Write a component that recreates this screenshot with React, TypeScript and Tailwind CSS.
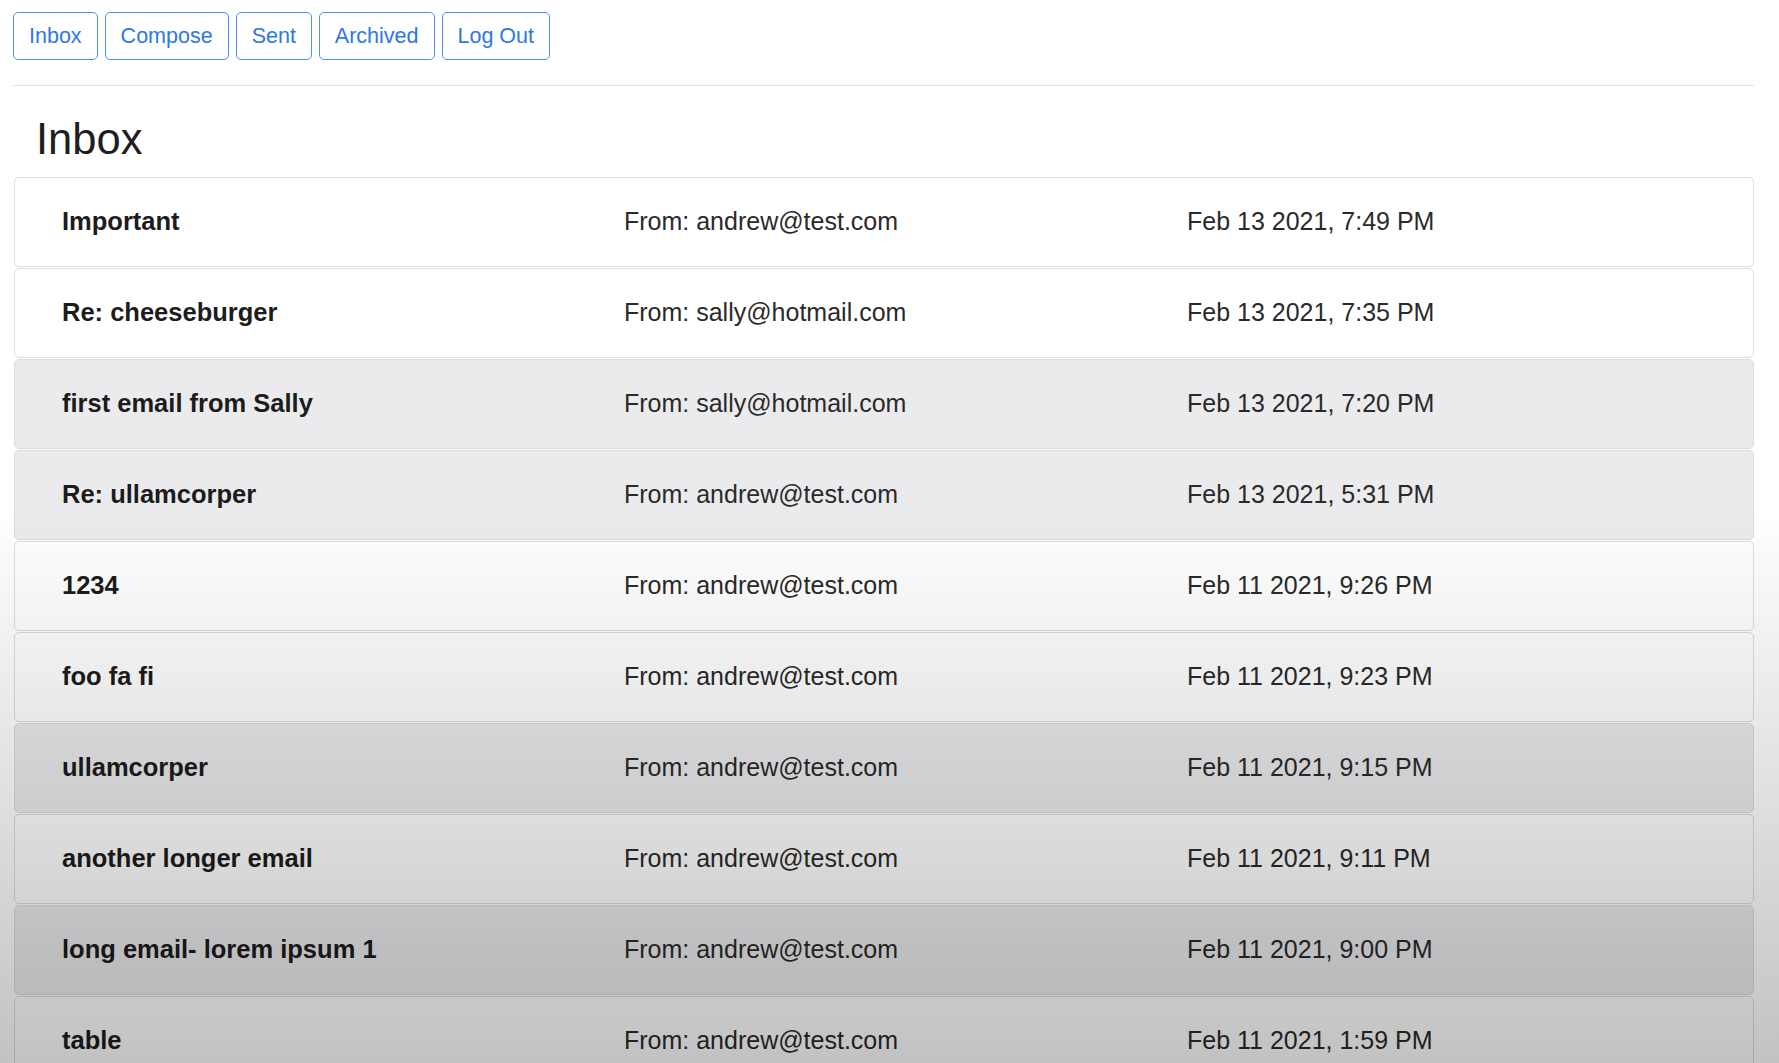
import React from "react";

type Email = { subject: string; from: string; date: string; read: boolean };

const emails: Email[] = [
  { subject: "Important", from: "andrew@test.com", date: "Feb 13 2021, 7:49 PM", read: false },
  { subject: "Re: cheeseburger", from: "sally@hotmail.com", date: "Feb 13 2021, 7:35 PM", read: false },
  { subject: "first email from Sally", from: "sally@hotmail.com", date: "Feb 13 2021, 7:20 PM", read: true },
  { subject: "Re: ullamcorper", from: "andrew@test.com", date: "Feb 13 2021, 5:31 PM", read: true },
  { subject: "1234", from: "andrew@test.com", date: "Feb 11 2021, 9:26 PM", read: false },
  { subject: "foo fa fi", from: "andrew@test.com", date: "Feb 11 2021, 9:23 PM", read: false },
  { subject: "ullamcorper", from: "andrew@test.com", date: "Feb 11 2021, 9:15 PM", read: true },
  { subject: "another longer email", from: "andrew@test.com", date: "Feb 11 2021, 9:11 PM", read: false },
  { subject: "long email- lorem ipsum 1", from: "andrew@test.com", date: "Feb 11 2021, 9:00 PM", read: true },
  { subject: "table", from: "andrew@test.com", date: "Feb 11 2021, 1:59 PM", read: false },
];

const navItems = ["Inbox", "Compose", "Sent", "Archived", "Log Out"];

export default function App() {
  return (
    <div
      className="relative h-screen overflow-hidden bg-white text-[#212529]"
      style={{ fontFamily: '"Liberation Sans", Arial, Helvetica, sans-serif' }}
    >
      <div className="pl-[13px] pr-[25px] pt-[12px]">
        <nav className="flex gap-[7px]">
          {navItems.map((item) => (
            <button
              key={item}
              className="h-[47.5px] rounded-[5px] border border-[#4d8ff0] px-[15px] pt-[2px] text-[21.5px] leading-[31.5px] text-[#2d78e3]"
            >
              {item}
            </button>
          ))}
        </nav>
        <div className="mt-[25px] border-t border-[#e4e4e4]" />
        <h1 className="ml-[23px] mt-[28px] text-[43.5px] font-medium leading-[50px] text-[#1e1e1e]">Inbox</h1>
        <div className="ml-px mt-[13px] flex flex-col gap-px">
          {emails.map((e) => (
            <div
              key={e.subject}
              className={`grid h-[90px] grid-cols-[562px_563px_1fr] items-center rounded-[5px] border border-[#dcdcdc] pl-[47px] text-[25px] leading-[37.5px] ${
                e.read ? "bg-[#ebebed]" : "bg-white"
              }`}
            >
              <div className="text-[25.5px] font-bold text-[#1c1c1c]">{e.subject}</div>
              <div className="text-[#2a2a2a]">From: {e.from}</div>
              <div className="text-[#2a2a2a]">{e.date}</div>
            </div>
          ))}
        </div>
      </div>
      <div className="pointer-events-none absolute inset-0 bg-[linear-gradient(to_bottom,rgba(0,0,0,0)_0%,rgba(0,0,0,0)_48%,rgba(0,0,0,0.24)_100%)]" />
    </div>
  );
}
